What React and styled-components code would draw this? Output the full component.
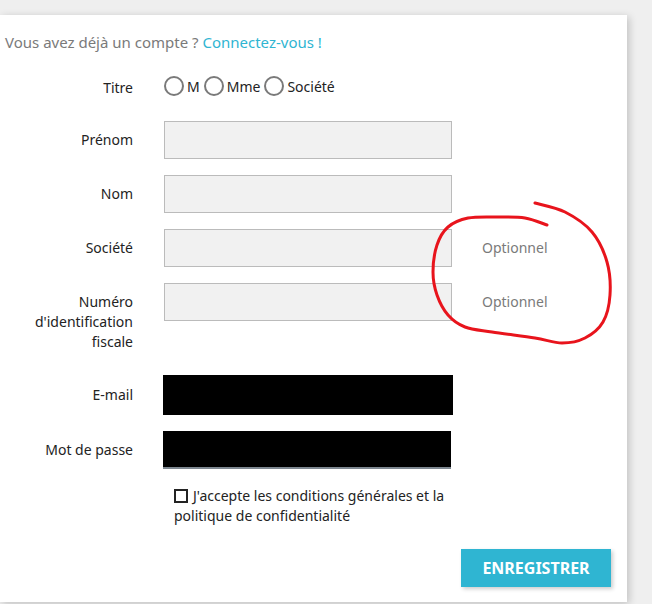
import React from "react";
import styled, { createGlobalStyle } from "styled-components";

const GlobalStyle = createGlobalStyle`
  html, body {
    margin: 0;
    padding: 0;
    background: #efefef;
  }
  body {
    font-family: "Noto Sans", "Open Sans", sans-serif;
    font-size: 14px;
    color: #232323;
  }
`;

const Page = styled.div`
  width: 652px;
  height: 604px;
  overflow: hidden;
  padding-top: 15px;
  box-sizing: border-box;
`;

const Card = styled.section`
  position: relative;
  width: 627px;
  height: 587px;
  background: #fff;
  box-shadow: 2px 2px 8px 0 rgba(0, 0, 0, 0.2);
  box-sizing: border-box;
  padding-top: 16px;
`;

const Intro = styled.p`
  margin: 0 0 16px 5px;
  font-size: 15px;
  line-height: 22px;
  color: #7a7a7a;
`;

const Link = styled.a`
  color: #2fb5d2;
  text-decoration: none;
`;

const Row = styled.div`
  display: grid;
  grid-template-columns: 133px 288px auto;
  column-gap: 31px;
  align-items: start;
  margin-bottom: ${(p) => p.$gap ?? 16}px;
`;

const Label = styled.label`
  text-align: right;
  line-height: 20px;
  padding-top: 9px;
`;

const Input = styled.input`
  box-sizing: border-box;
  width: 288px;
  height: 38px;
  margin: 0;
  background: #f1f1f1;
  border: 1px solid #bbb;
  font: inherit;
`;

const Redacted = styled.div`
  box-sizing: border-box;
  width: ${(p) => p.$w}px;
  height: ${(p) => p.$h}px;
  margin: ${(p) => p.$m};
  background: #000;
  border-bottom: ${(p) => (p.$line ? "2px solid #7d8790" : "none")};
`;

const Hint = styled.span`
  line-height: 20px;
  padding-top: 9px;
  margin-left: -1px;
  color: #7a7a7a;
`;

const Radios = styled.div`
  display: flex;
  align-items: center;
  height: 38px;
  margin-top: -2px;
`;

const RadioItem = styled.label`
  display: flex;
  align-items: center;
  margin-right: 4px;
`;

const RadioCircle = styled.span`
  box-sizing: border-box;
  width: 20px;
  height: 20px;
  border: 2px solid #7a7a7a;
  border-radius: 50%;
  margin-right: 3px;
`;

const Consent = styled.div`
  margin: 17px 0 0 174px;
  width: 280px;
  line-height: 20px;
`;

const CheckBox = styled.span`
  display: inline-block;
  box-sizing: border-box;
  width: 14px;
  height: 14px;
  border: 2px solid #232323;
  vertical-align: -2px;
  margin-right: 5px;
`;

const Footer = styled.div`
  display: flex;
  justify-content: flex-end;
  padding-right: 16px;
  margin-top: 23px;
`;

const SubmitButton = styled.button`
  width: 150px;
  height: 38px;
  border: none;
  background: #2fb5d2;
  color: #fff;
  font-family: "Noto Sans", sans-serif;
  font-weight: 700;
  font-size: 16px;
  text-transform: uppercase;
  box-shadow: 2px 2px 4px 0 rgba(0, 0, 0, 0.2);
  cursor: pointer;
`;

const Scribble = styled.svg`
  position: absolute;
  left: 420px;
  top: 180px;
  pointer-events: none;
`;

// hand-drawn annotation, points in svg space
const loop = [
  [115, 8], [145, 17], [172, 37], [187, 67], [190, 100], [183, 127],
  [165, 143], [142, 148], [115, 143], [72, 137], [45, 132], [28, 120],
  [17, 100], [13, 77], [17, 50], [28, 32], [48, 23], [78, 22],
  [105, 23], [127, 30],
];

function smoothPath(pts) {
  let d = `M${pts[0][0]} ${pts[0][1]}`;
  for (let i = 0; i < pts.length - 1; i++) {
    const p0 = pts[i - 1] || pts[i];
    const p1 = pts[i];
    const p2 = pts[i + 1];
    const p3 = pts[i + 2] || p2;
    const c1 = [p1[0] + (p2[0] - p0[0]) / 6, p1[1] + (p2[1] - p0[1]) / 6];
    const c2 = [p2[0] - (p3[0] - p1[0]) / 6, p2[1] - (p3[1] - p1[1]) / 6];
    d += ` C${c1[0]} ${c1[1]} ${c2[0]} ${c2[1]} ${p2[0]} ${p2[1]}`;
  }
  return d;
}

const titles = ["M", "Mme", "Société"];

export default function App() {
  return (
    <Page>
      <GlobalStyle />
      <Card>
        <Intro>
          Vous avez déjà un compte ? <Link href="#">Connectez-vous !</Link>
        </Intro>

        <Row>
          <Label>Titre</Label>
          <Radios>
            {titles.map((t) => (
              <RadioItem key={t}>
                <RadioCircle />
                {t}
              </RadioItem>
            ))}
          </Radios>
        </Row>

        <Row>
          <Label>Prénom</Label>
          <Input />
        </Row>
        <Row>
          <Label>Nom</Label>
          <Input />
        </Row>
        <Row>
          <Label>Société</Label>
          <Input />
          <Hint>Optionnel</Hint>
        </Row>
        <Row $gap={24}>
          <Label>
            Numéro
            <br />
            d'identification
            <br />
            fiscale
          </Label>
          <Input />
          <Hint>Optionnel</Hint>
        </Row>

        <Row>
          <Label>E-mail</Label>
          <Redacted $w={290} $h={40} $m="-1px 0 0 -1px" />
        </Row>
        <Row $gap={0}>
          <Label>Mot de passe</Label>
          <Redacted $w={288} $h={38} $m="0 0 0 -1px" $line />
        </Row>

        <Consent>
          <CheckBox />
          J'accepte les conditions générales et la politique de confidentialité
        </Consent>

        <Footer>
          <SubmitButton>Enregistrer</SubmitButton>
        </Footer>

        <Scribble width="200" height="175" viewBox="0 0 200 175">
          <path
            d={smoothPath(loop)}
            fill="none"
            stroke="#e8141c"
            strokeWidth="3"
            strokeLinecap="round"
            strokeLinejoin="round"
          />
        </Scribble>
      </Card>
    </Page>
  );
}
